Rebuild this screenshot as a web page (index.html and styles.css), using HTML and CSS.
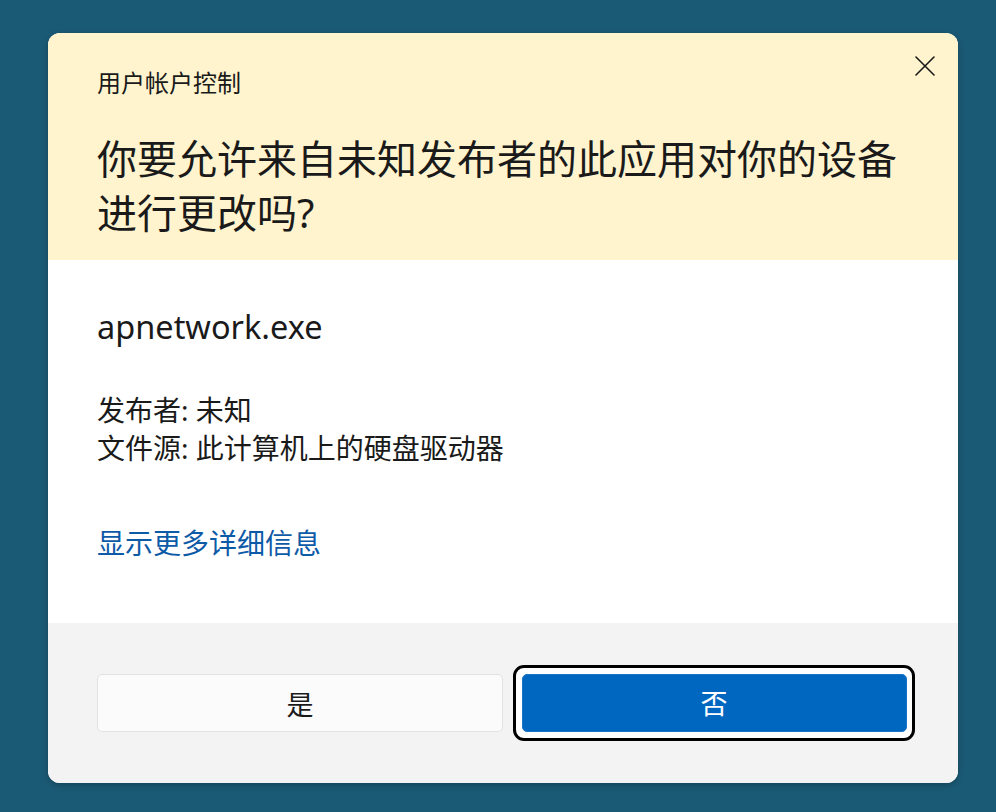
FILE: index.html
```html
<!DOCTYPE html>
<html lang="zh-CN">
<head>
<meta charset="utf-8">
<title>用户帐户控制</title>
<link rel="stylesheet" href="styles.css">
</head>
<body>
<div class="dialog">
  <div class="header">
    <div class="title-row">
      <div class="title">用户帐户控制</div>
      <button class="close" aria-label="关闭">
        <svg width="20" height="20" viewBox="0 0 20 20"><path d="M1 1 L19 19 M19 1 L1 19" stroke="#1a1a1a" stroke-width="1.6" fill="none" stroke-linecap="round"/></svg>
      </button>
    </div>
    <div class="heading">你要允许来自未知发布者的此应用对你的设备进行更改吗?</div>
  </div>
  <div class="body">
    <div class="app-name">apnetwork.exe</div>
    <div class="info">
      <div>发布者: 未知</div>
      <div>文件源: 此计算机上的硬盘驱动器</div>
    </div>
    <a class="more" href="#">显示更多详细信息</a>
  </div>
  <div class="footer">
    <button class="btn btn-yes">是</button>
    <div class="focus-ring">
      <button class="btn btn-no">否</button>
    </div>
  </div>
</div>
</body>
</html>
```

FILE: styles.css
```css
* { box-sizing: border-box; }
html, body { margin: 0; padding: 0; }
body {
  width: 996px;
  height: 812px;
  background: #1b5a75;
  font-family: "Noto Sans", "Noto Sans CJK SC", sans-serif;
  color: #1a1a1a;
  padding: 33px 0 0 48px;
  overflow: hidden;
}
.dialog {
  width: 910px;
  height: 750px;
  border-radius: 12px;
  overflow: hidden;
  display: flex;
  flex-direction: column;
  box-shadow: 0 2px 6px rgba(0,0,0,0.25);
  background: #fff;
}
.header {
  height: 227px;
  background: #fff4ce;
  padding: 0 0 0 49px;
}
.title-row {
  display: flex;
  justify-content: space-between;
  align-items: flex-start;
}
.title {
  margin-top: 35px;
  font-size: 24px;
  line-height: 30px;
}
.close {
  margin-top: 13px;
  margin-right: 13px;
  width: 40px;
  height: 40px;
  border: 0;
  background: transparent;
  padding: 0;
  display: flex;
  align-items: center;
  justify-content: center;
}
.heading {
  margin-top: 34px;
  font-size: 40px;
  line-height: 54px;
  width: 810px;
}
.body {
  height: 363px;
  padding: 47px 49px 0;
}
.app-name {
  font-size: 32.5px;
  line-height: 40px;
}
.info {
  margin-top: 44px;
  font-size: 28px;
  line-height: 38px;
}
.more {
  display: block;
  margin-top: 56px;
  font-size: 28px;
  line-height: 40px;
  color: #0d5aa7;
  text-decoration: none;
}
.footer {
  height: 160px;
  background: #f3f3f3;
  display: flex;
  align-items: center;
  padding-left: 49px;
  gap: 10px;
}
.btn {
  font-family: "Noto Sans CJK SC", sans-serif;
  font-size: 27px;
  height: 58px;
  border-radius: 5px;
  padding: 0;
}
.btn-yes {
  width: 406px;
  background: #fbfbfb;
  border: 1px solid #e2e2e2;
  color: #1a1a1a;
}
.focus-ring {
  width: 402px;
  height: 76px;
  border: 3.5px solid #000;
  border-radius: 11px;
  background: #fff;
  padding: 5.5px;
}
.btn-no {
  width: 100%;
  background: #0067c0;
  border: 1px solid #1a73c8;
  color: #fff;
}
```
